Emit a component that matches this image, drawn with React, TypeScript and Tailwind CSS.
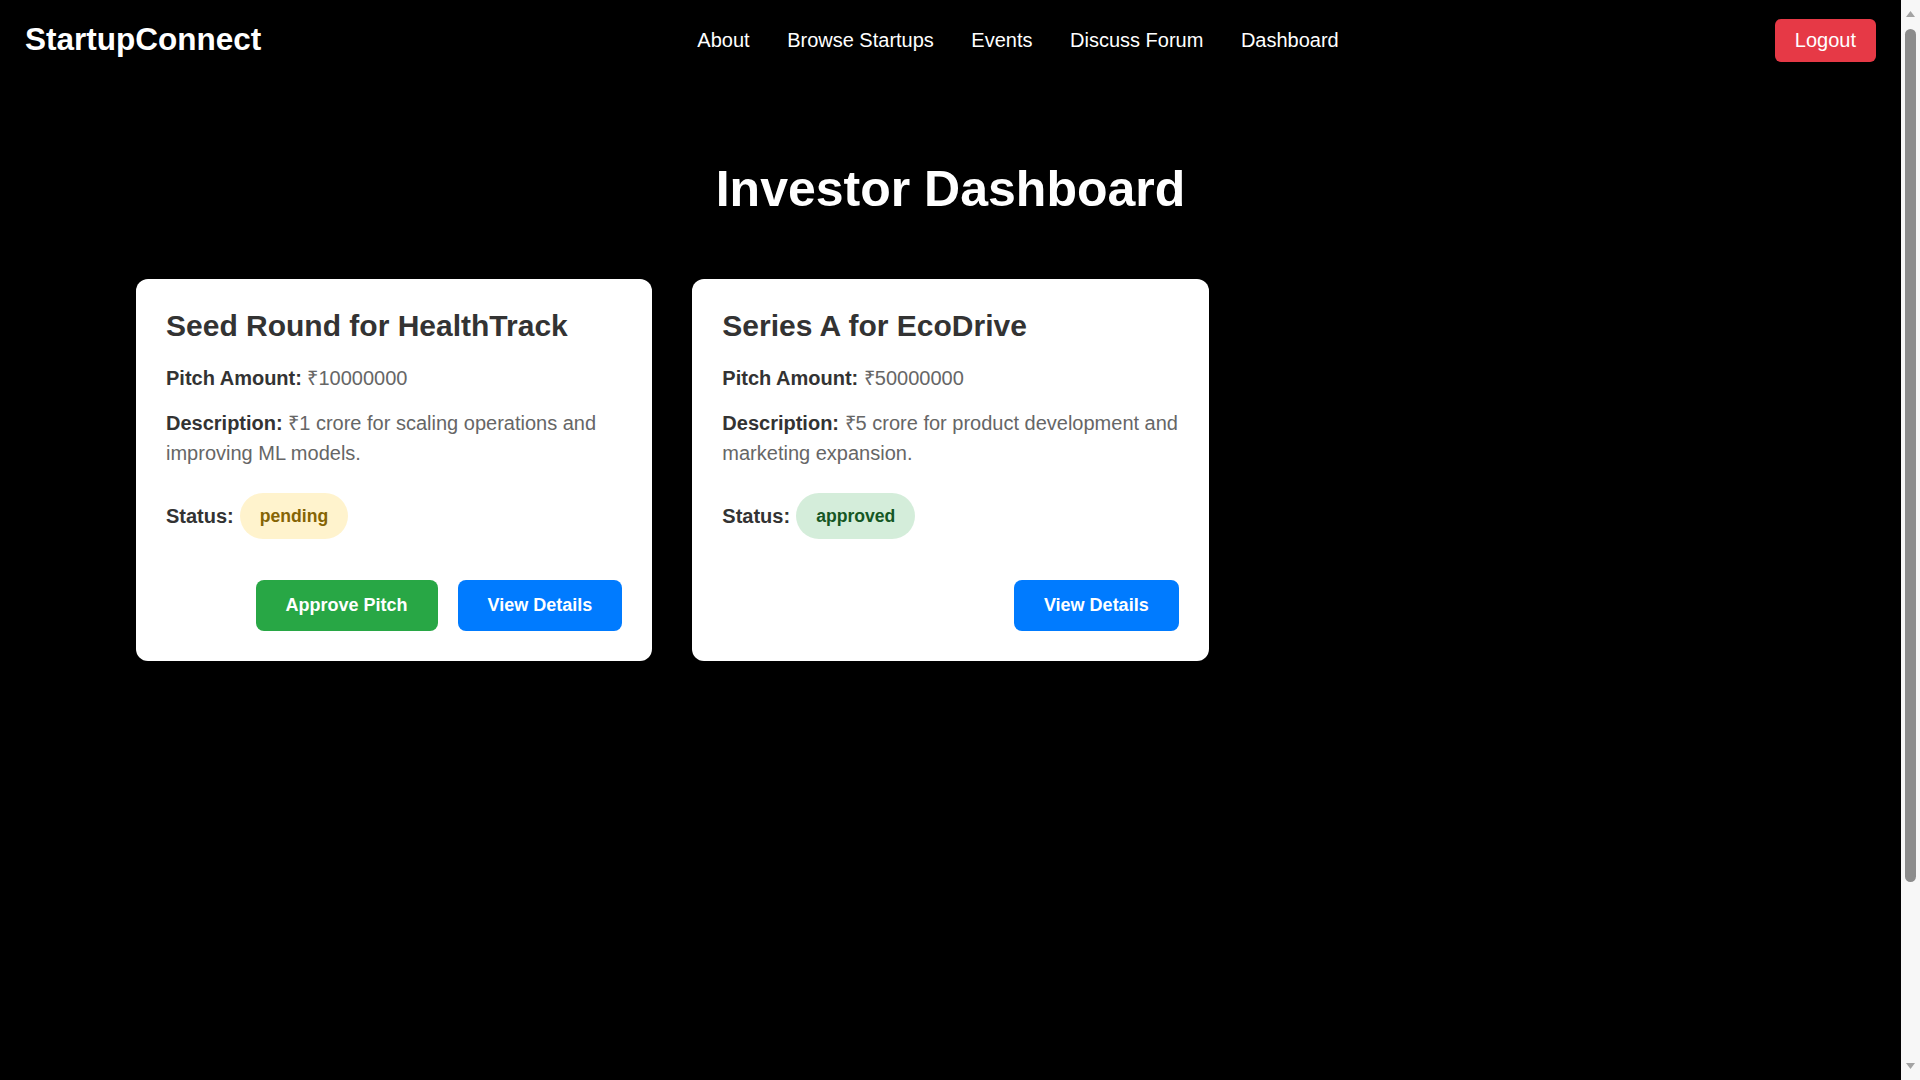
type Pitch = {
  id: number;
  title: string;
  amount: string;
  description: string;
  status: "pending" | "approved";
};

const pitches: Pitch[] = [
  {
    id: 1,
    title: "Seed Round for HealthTrack",
    amount: "₹10000000",
    description: "₹1 crore for scaling operations and improving ML models.",
    status: "pending",
  },
  {
    id: 2,
    title: "Series A for EcoDrive",
    amount: "₹50000000",
    description: "₹5 crore for product development and marketing expansion.",
    status: "approved",
  },
];

const navLinks = ["About", "Browse Startups", "Events", "Discuss Forum", "Dashboard"];

function Navbar() {
  return (
    <nav className="h-[80px] flex items-center justify-between px-[25px]">
      <span className="text-[31.5px] font-bold text-white">StartupConnect</span>
      <div className="flex gap-[37.5px]">
        {navLinks.map((link) => (
          <a key={link} href="#" className="text-[20px] text-white">
            {link}
          </a>
        ))}
      </div>
      <button
        type="button"
        className="h-[43px] px-[20px] rounded-[6px] bg-[#e63946] text-white text-[20px]"
      >
        Logout
      </button>
    </nav>
  );
}

function PitchCard({ pitch }: { pitch: Pitch }) {
  const pending = pitch.status === "pending";

  return (
    <div className="bg-white rounded-[12px] p-[30px] flex flex-col">
      <h2 className="text-[30px] leading-[34px] font-bold text-[#333]">{pitch.title}</h2>

      <p className="mt-[20px] text-[20px] leading-[30px] text-[#666]">
        <b className="text-[#333]">Pitch Amount:</b> {pitch.amount}
      </p>

      <p className="mt-[15px] text-[20px] leading-[30px] text-[#666]">
        <b className="text-[#333]">Description:</b> {pitch.description}
      </p>

      <div className="mt-[25px] flex items-center gap-[6px]">
        <b className="text-[20px] text-[#333]">Status:</b>
        <span
          className={
            pending
              ? "h-[46px] px-[20px] flex items-center rounded-full bg-[#fff3cd] text-[#856404] text-[17.6px] font-bold"
              : "h-[46px] px-[20px] flex items-center rounded-full bg-[#d4edda] text-[#155724] text-[17.6px] font-bold"
          }
        >
          {pitch.status}
        </span>
      </div>

      <div className="mt-[41px] flex justify-end gap-[20px]">
        {pending && (
          <button
            type="button"
            className="h-[51px] px-[30px] rounded-[8px] bg-[#28a745] text-white text-[18px] font-bold"
          >
            Approve Pitch
          </button>
        )}
        <button
          type="button"
          className="h-[51px] px-[30px] rounded-[8px] bg-[#007bff] text-white text-[18px] font-bold"
        >
          View Details
        </button>
      </div>
    </div>
  );
}

// page scrollbar as it shows in the screenshot
function Scrollbar() {
  return (
    <aside className="w-[19px] shrink-0 bg-[#f7f7f7] flex flex-col items-center">
      <svg width="9" height="6" viewBox="0 0 9 6" className="mt-[11px]">
        <path d="M4.5 0L9 6H0z" fill="#a3a3a3" />
      </svg>
      <div className="mt-[12px] w-[11px] h-[853px] rounded-full bg-[#8c8c8c]" />
      <svg width="9" height="6" viewBox="0 0 9 6" className="mt-auto mb-[11px]">
        <path d="M0 0H9L4.5 6z" fill="#a3a3a3" />
      </svg>
    </aside>
  );
}

export default function App() {
  return (
    <div className="h-screen flex bg-black font-['Liberation_Sans',Arial,sans-serif]">
      <div className="flex-1 min-w-0">
        <Navbar />

        <main>
          <h1 className="mt-[80px] text-center text-[50px] leading-[58px] font-bold text-white">
            Investor Dashboard
          </h1>

          {/* three columns, only two used for now */}
          <div className="mt-[61px] px-[136px] grid grid-cols-3 gap-[40px] items-start">
            {pitches.map((pitch) => (
              <PitchCard key={pitch.id} pitch={pitch} />
            ))}
          </div>
        </main>
      </div>
      <Scrollbar />
    </div>
  );
}
